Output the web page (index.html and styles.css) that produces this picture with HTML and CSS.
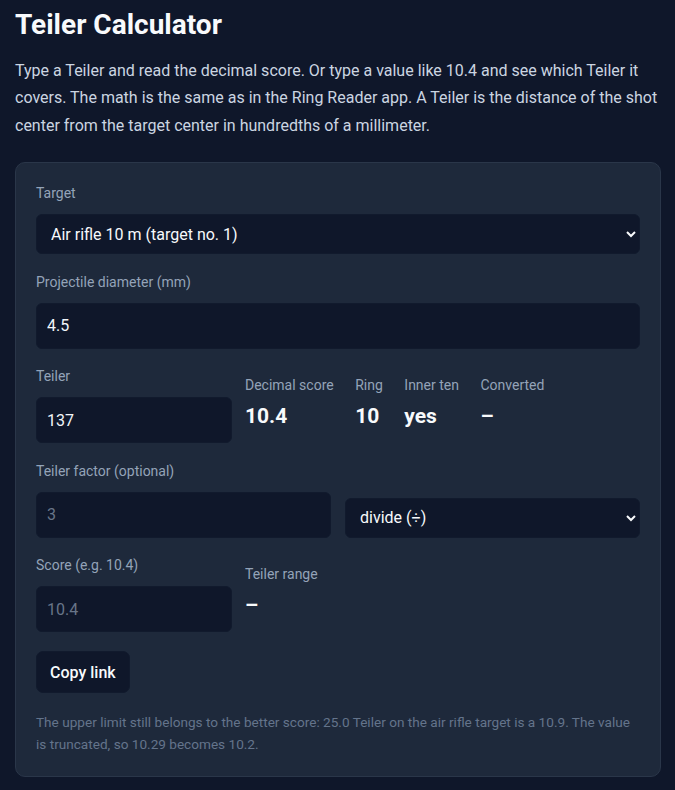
FILE: index.html
```html
<!DOCTYPE html>
<html lang="en">
<head>
<meta charset="utf-8">
<title>Teiler Calculator</title>
<link rel="stylesheet" href="styles.css">
</head>
<body>
<main class="page">
  <h1 class="title">Teiler Calculator</h1>
  <p class="intro">Type a Teiler and read the decimal score. Or type a value like 10.4 and see which Teiler it covers. The math is the same as in the Ring Reader app. A Teiler is the distance of the shot center from the target center in hundredths of a millimeter.</p>
  <section class="card">
    <div class="field">
      <label class="label" for="target">Target</label>
      <select class="select" id="target"><option>Air rifle 10 m (target no. 1)</option></select>
    </div>
    <div class="field">
      <label class="label" for="diam">Projectile diameter (mm)</label>
      <input class="input" id="diam" type="text" value="4.5">
    </div>
    <div class="row">
      <div class="field narrow">
        <label class="label" for="teiler">Teiler</label>
        <input class="input" id="teiler" type="text" value="137">
      </div>
      <div class="stats">
        <div class="stat"><span class="stat-label">Decimal score</span><span class="stat-value">10.4</span></div>
        <div class="stat"><span class="stat-label">Ring</span><span class="stat-value">10</span></div>
        <div class="stat"><span class="stat-label">Inner ten</span><span class="stat-value">yes</span></div>
        <div class="stat"><span class="stat-label">Converted</span><span class="stat-value">–</span></div>
      </div>
    </div>
    <div class="factor-row">
      <div class="field">
        <label class="label" for="factor">Teiler factor (optional)</label>
        <input class="input" id="factor" type="text" placeholder="3">
      </div>
      <select class="select"><option>divide (÷)</option></select>
    </div>
    <div class="row">
      <div class="field narrow">
        <label class="label" for="score">Score (e.g. 10.4)</label>
        <input class="input" id="score" type="text" placeholder="10.4">
      </div>
      <div class="stats">
        <div class="stat"><span class="stat-label">Teiler range</span><span class="stat-value">–</span></div>
      </div>
    </div>
    <button class="btn" type="button">Copy link</button>
    <p class="note">The upper limit still belongs to the better score: 25.0 Teiler on the air rifle target is a 10.9. The value is truncated, so 10.29 becomes 10.2.</p>
  </section>
</main>
</body>
</html>
```

FILE: styles.css
```css
* { box-sizing: border-box; }

html, body {
  margin: 0;
  background: #0f172a;
  color-scheme: dark;
}

body {
  font-family: Roboto, "Liberation Sans", sans-serif;
  color: #e2e8f0;
}

.page {
  padding: 8px 14px 0 15px;
}

.title {
  margin: 0;
  font-size: 28px;
  line-height: 34px;
  font-weight: 700;
  color: #f8fafc;
}

.intro {
  margin: 14.5px 0 0;
  font-size: 16px;
  line-height: 27.5px;
  color: #cbd5e1;
}

.card {
  margin-top: 23px;
  background: #1e293b;
  border: 1px solid #2a3649;
  border-radius: 10px;
  padding: 20px;
  display: flex;
  flex-direction: column;
  gap: 17.5px;
}

.field {
  display: flex;
  flex-direction: column;
  gap: 10px;
  min-width: 0;
}

.label {
  font-size: 14px;
  line-height: 21px;
  color: #94a3b8;
}

.input {
  height: 46px;
  width: 100%;
  background: #0f172a;
  border: 1px solid #111a2d;
  border-radius: 6px;
  padding: 0 10px;
  font-family: Roboto, "Liberation Sans", sans-serif;
  font-size: 16px;
  color: #f1f5f9;
  outline: none;
}

.input::placeholder {
  color: #687588;
}

.select {
  height: 40px;
  width: 100%;
  background-color: #0f172a;
  border: 1px solid #111a2d;
  border-radius: 6px;
  padding: 0 6px 0 10px;
  font-family: Roboto, "Liberation Sans", sans-serif;
  font-size: 16px;
  color: #f8fafc;
  color-scheme: dark;
}

.row {
  display: flex;
  align-items: flex-start;
  gap: 13px;
}

.narrow {
  flex: 0 0 196px;
}

.stats {
  display: flex;
  gap: 21.5px;
  padding-top: 9px;
}

.stat {
  display: flex;
  flex-direction: column;
  gap: 6px;
}

.stat-label {
  font-size: 14px;
  line-height: 21px;
  color: #94a3b8;
}

.stat-value {
  font-size: 21px;
  line-height: 28px;
  font-weight: 700;
  color: #f8fafc;
}

.factor-row {
  display: grid;
  grid-template-columns: 1fr 1fr;
  align-items: end;
  gap: 14px;
}

.btn {
  align-self: flex-start;
  margin-top: 1.5px;
  height: 42px;
  padding: 0 13px;
  background: #0f172a;
  border: 1px solid #111a2d;
  border-radius: 7px;
  font-family: Roboto, "Liberation Sans", sans-serif;
  font-size: 16px;
  font-weight: 500;
  color: #f8fafc;
}

.note {
  margin: 0;
  padding-right: 4px;
  font-size: 13.6px;
  line-height: 22.5px;
  color: #64748b;
}
```
